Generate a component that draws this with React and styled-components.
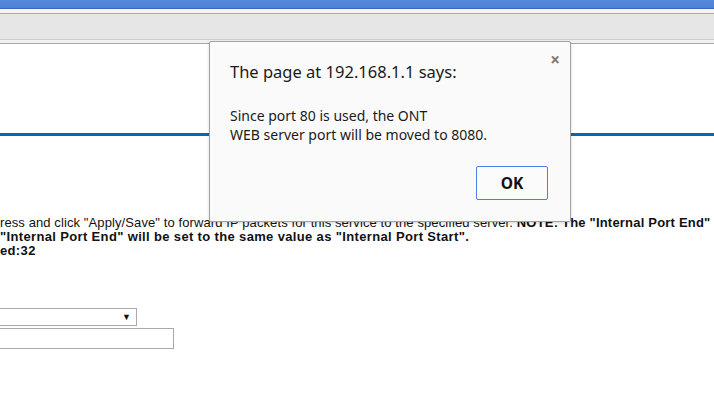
import React from 'react'
import styled, { createGlobalStyle } from 'styled-components'

const GlobalStyle = createGlobalStyle`
    html, body {
        margin: 0;
        padding: 0;
        background: #ffffff;
        overflow: hidden;
    }
    #root {
        width: 714px;
        height: 405px;
        position: relative;
        overflow: hidden;
    }
`

const TitleBar = styled.div`
    height: 8px;
    background: linear-gradient(#5689dc, #4f80d6);
    border-bottom: 1px solid #3d68b8;
`

const TabStrip = styled.div`
    height: 4px;
    background: #f4f4f4;
    border-bottom: 1px solid #a9a9a9;
`

const Toolbar = styled.div`
    height: 25px;
    background: #e6e6e6;
    border-bottom: 1px solid #cfcfcf;
`

const ToolbarEdge = styled.div`
    height: 3px;
    background: #f1f1f1;
    border-bottom: 1px solid #a7a7a7;
`

const Page = styled.div`
    font-family: "Liberation Sans", Arial, sans-serif;
    font-size: 13px;
    color: #111;
`

const Header = styled.div`
    height: 89px;
    border-bottom: 3px solid #0a65b2;
`

const Notes = styled.div`
    margin-top: 80px;
    line-height: 14px;
    white-space: nowrap;
    overflow: hidden;
`

const Line = styled.div`
    font-weight: ${props => (props.bold ? 'bold' : 'normal')};
    letter-spacing: ${props => (props.bold ? '0.35px' : '0.1px')};
`

const Strong = styled.b`
    letter-spacing: 0.2px;
`

const Form = styled.div`
    margin-top: 50px;
    display: flex;
    flex-direction: column;
    gap: 2px;
`

const Select = styled.div`
    box-sizing: border-box;
    width: 142px;
    height: 18px;
    margin-left: -5px;
    border: 1px solid #a9a9a9;
    background: #fff;
    display: flex;
    justify-content: flex-end;
    align-items: center;
    padding-right: 5px;
    font-size: 9px;
`

const Input = styled.div`
    box-sizing: border-box;
    width: 179px;
    height: 21px;
    margin-left: -5px;
    border: 1px solid #a9a9a9;
    background: #fff;
`

const Dialog = styled.div`
    position: absolute;
    left: 209px;
    top: 41px;
    width: 362px;
    height: 181px;
    box-sizing: border-box;
    background: #fafafa;
    border: 1px solid #a3a3a3;
    border-radius: 2px;
    box-shadow: 0 1px 3px rgba(0, 0, 0, 0.18);
    font-family: "Noto Sans", "Open Sans", sans-serif;
    color: #1a1a1a;
    padding: 16px 0 0 20px;
`

const Close = styled.div`
    position: absolute;
    right: 10px;
    top: 9px;
    font-size: 17px;
    line-height: 17px;
    color: #7a7a7a;
    font-weight: bold;
`

const DialogTitle = styled.div`
    font-size: 16.5px;
    line-height: 28px;
`

const Message = styled.div`
    margin-top: 20px;
    font-size: 14px;
    line-height: 19px;
`

const Buttons = styled.div`
    display: flex;
    justify-content: flex-end;
    padding-right: 22px;
    margin-top: 22px;
`

const OkButton = styled.button`
    width: 72px;
    height: 34px;
    box-sizing: border-box;
    background: #fbfbfb;
    border: 1px solid #4d7fe0;
    border-radius: 2px;
    font-family: "Noto Sans", "Open Sans", sans-serif;
    font-weight: bold;
    font-size: 15.5px;
    color: #111;
`

export default function App() {
  return (
    <>
        <GlobalStyle />
        <TitleBar />
        <TabStrip />
        <Toolbar />
        <ToolbarEdge />
        <Page>
            <Header />
            <Notes>
                <Line>
                    ress and click "Apply/Save" to forward IP packets for this service to the specified server.{' '}
                    <Strong>NOTE: The "Internal Port End" c</Strong>
                </Line>
                <Line bold>"Internal Port End" will be set to the same value as "Internal Port Start".</Line>
                <Line bold>ed:32</Line>
            </Notes>
            <Form>
                <Select>▼</Select>
                <Input />
            </Form>
        </Page>
        <Dialog>
            <Close>×</Close>
            <DialogTitle>The page at 192.168.1.1 says:</DialogTitle>
            <Message>
                Since port 80 is used, the ONT
                <br />
                WEB server port will be moved to 8080.
            </Message>
            <Buttons>
                <OkButton>OK</OkButton>
            </Buttons>
        </Dialog>
    </>
  )
}
